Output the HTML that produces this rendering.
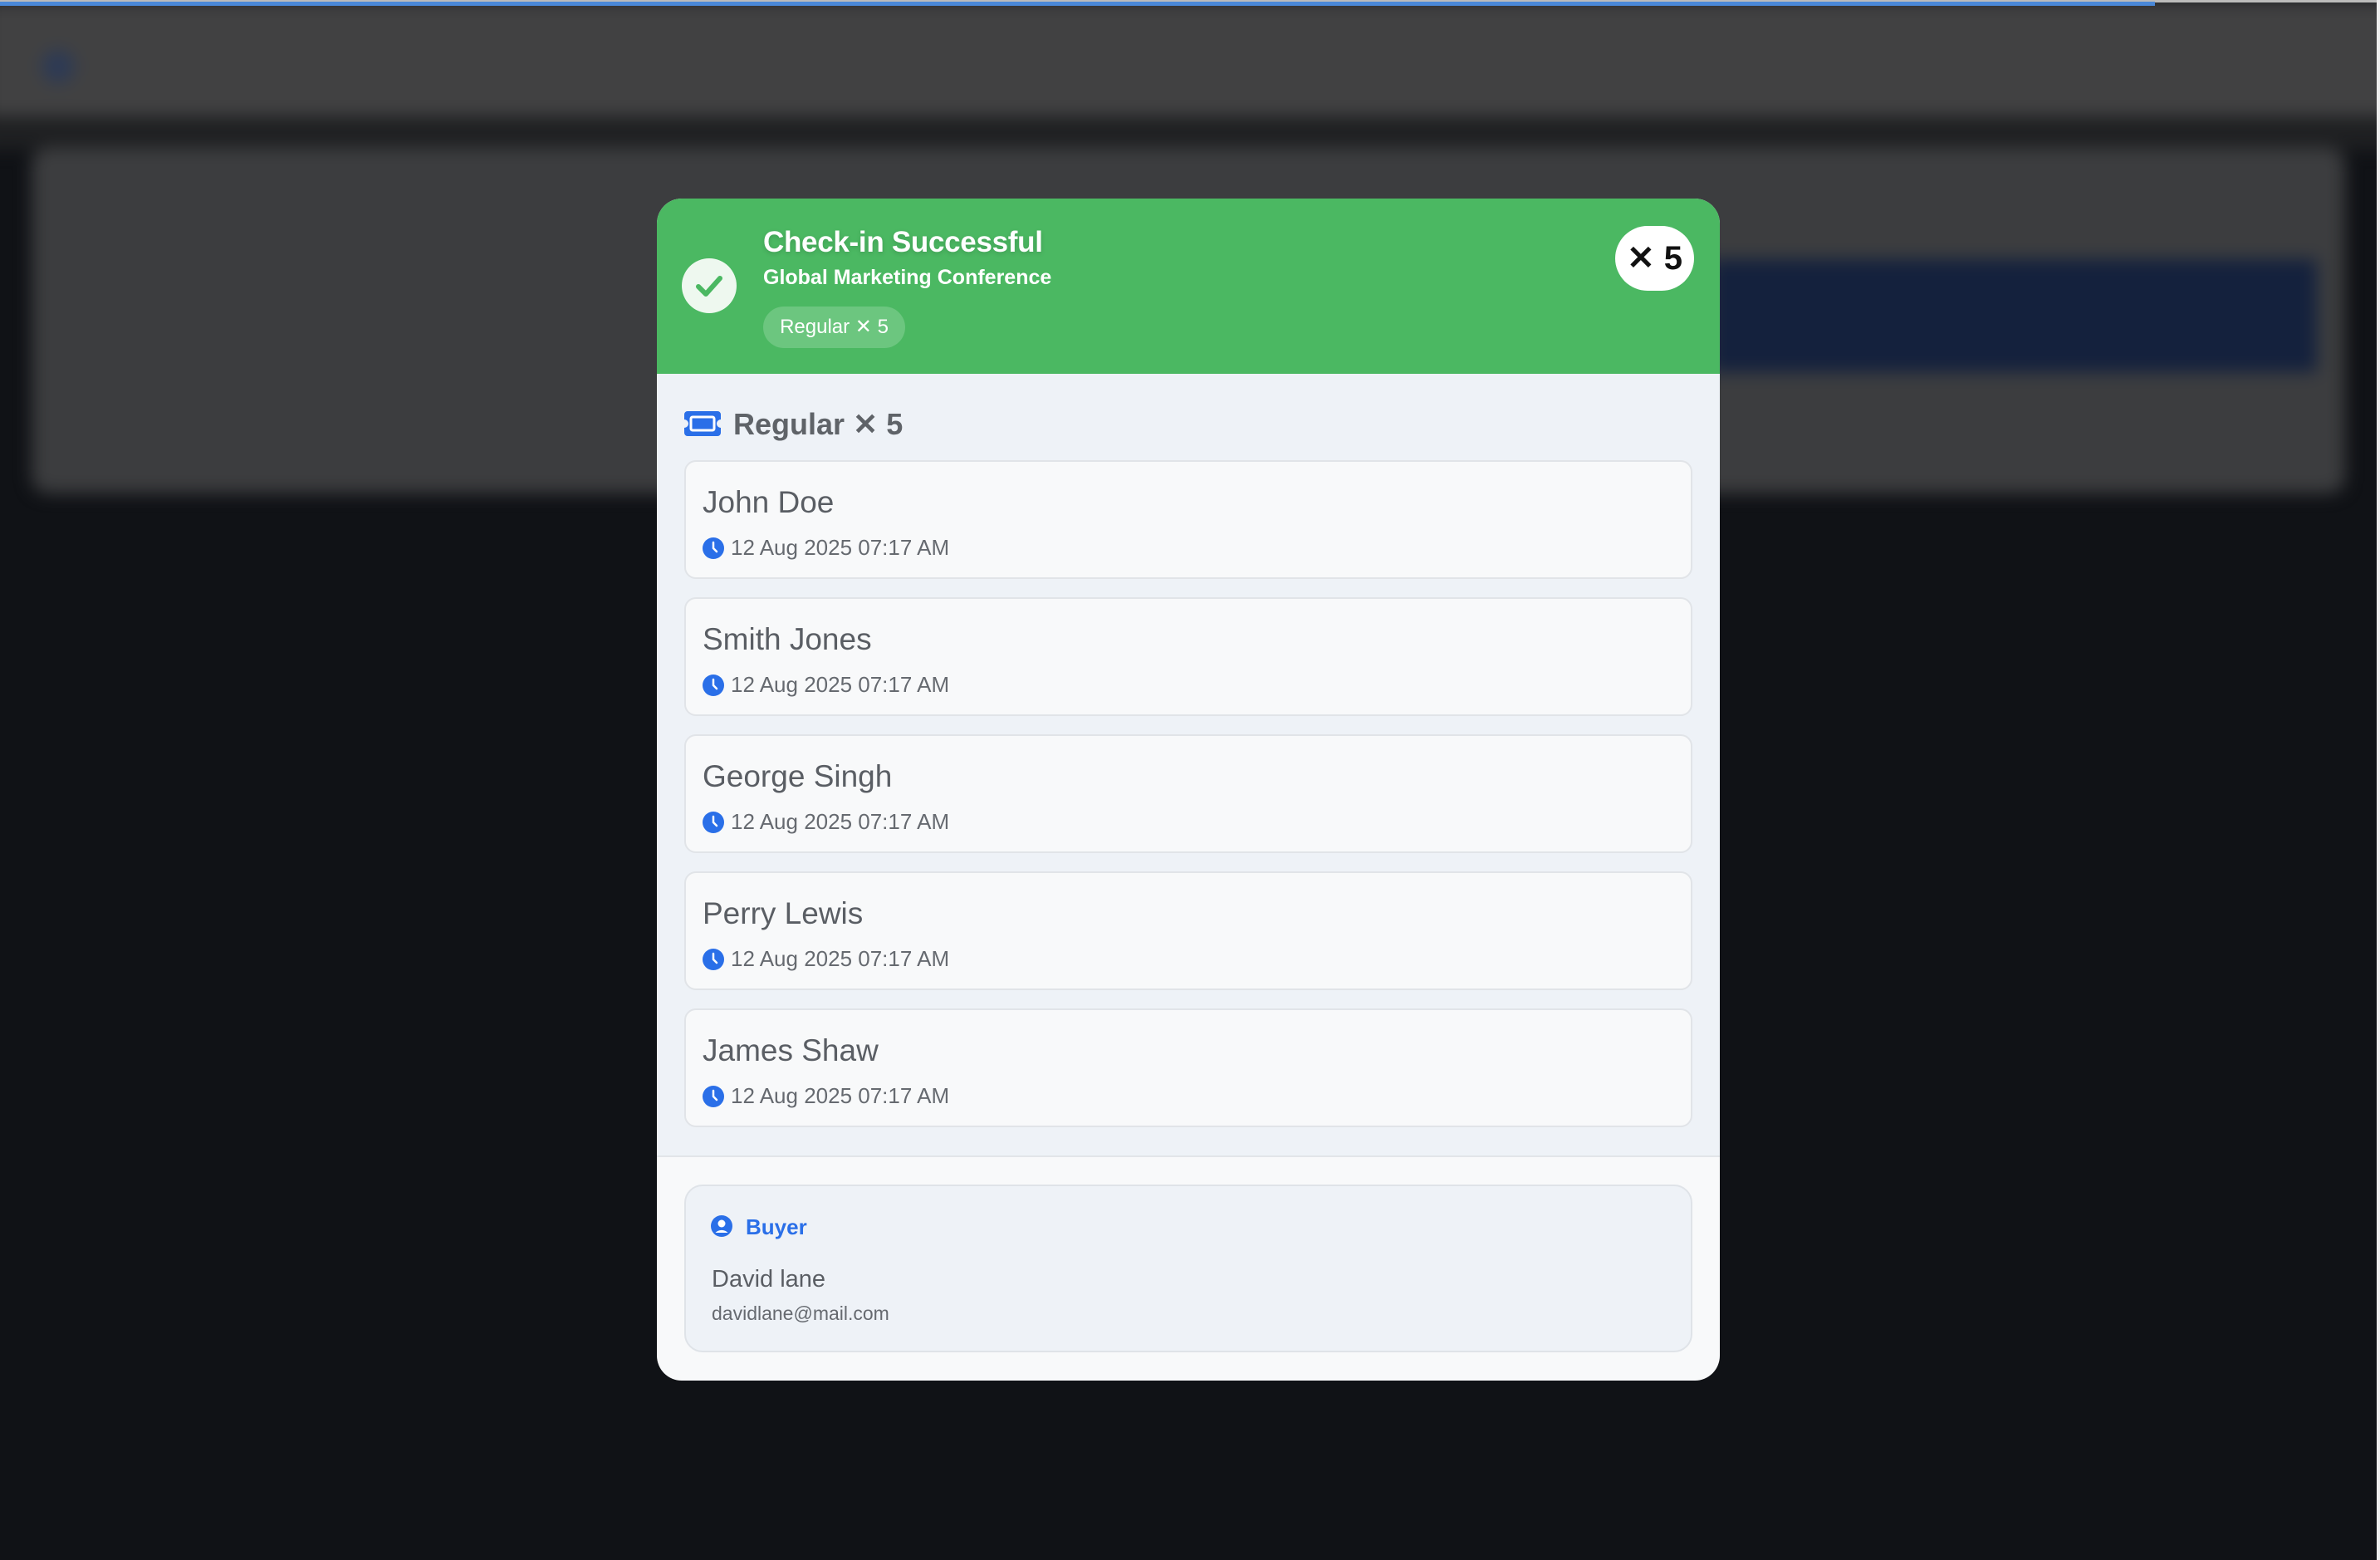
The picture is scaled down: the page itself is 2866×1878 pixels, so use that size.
<!DOCTYPE html>
<html><head><meta charset="utf-8"><style>
*{box-sizing:border-box;margin:0;padding:0}
html,body{width:2866px;height:1878px;overflow:hidden;background:#101216;font-family:"Liberation Sans",sans-serif}
.abs{position:absolute}
.card{width:1214px;height:143px;left:33px;background:#f8f9fa;border:2px solid #e1e4e8;border-radius:14px}
.name{position:absolute;left:20px;top:28px;font-size:37px;color:#5a5e64;font-weight:500}
.time{position:absolute;left:20px;top:88px;font-size:26px;color:#666a70;display:flex;align-items:center;gap:8px}
</style></head><body>
<div class="abs" style="left:0;top:0;width:2866px;height:1878px;filter:blur(10px)">
<div class="abs" style="left:-20px;top:0;width:2906px;height:140px;background:#414142"></div>
<div class="abs" style="left:-20px;top:140px;width:2906px;height:40px;background:#1f2022"></div>
<div class="abs" style="left:38px;top:178px;width:2786px;height:416px;background:#3c3d3f;border-radius:20px"></div>
<div class="abs" style="left:2060px;top:312px;width:730px;height:136px;background:#14213d"></div>
<div class="abs" style="left:50px;top:60px;width:40px;height:40px;border-radius:50%;background:#2d3a55"></div>
</div>
<div class="abs" style="left:0;top:0;width:2866px;height:3px;background:#bbb"></div>
<div class="abs" style="left:0;top:2px;width:2595px;height:5px;background:#4a88d8"></div>
<div class="abs" style="left:2862px;top:0;width:4px;height:1878px;background:#eee"></div>

<div class="abs" style="left:791px;top:239px;width:1280px;height:1423px;border-radius:30px;overflow:hidden;background:#f8f9fa">
  <div class="abs" style="left:0;top:0;width:1280px;height:211px;background:#4bb862"></div>
  <div class="abs" style="left:30px;top:72px;width:66px;height:66px;border-radius:50%;background:#eef8ef">
    <svg width="66" height="66" viewBox="0 0 66 66"><path d="M20 34 L29 43 L46 24" stroke="#4bb862" stroke-width="6" fill="none" stroke-linecap="round" stroke-linejoin="round"/></svg>
  </div>
  <div class="abs" style="left:128px;top:33px;font-size:35px;font-weight:bold;color:#fff;letter-spacing:-0.3px;text-shadow:0 2px 6px rgba(0,0,0,.15)">Check-in Successful</div>
  <div class="abs" style="left:128px;top:81px;font-size:25px;font-weight:bold;color:#fff">Global Marketing Conference</div>
  <div class="abs" style="left:128px;top:130px;width:171px;height:50px;border-radius:25px;background:#6cc67f;color:#fff;font-size:24px;line-height:50px;text-align:center">Regular ✕ 5</div>
  <div class="abs" style="left:1154px;top:33px;width:95px;height:78px;border-radius:39px;background:#fff;color:#111;font-size:40px;font-weight:bold;line-height:78px;text-align:center">✕ 5</div>

  <div class="abs" style="left:0;top:211px;width:1280px;height:943px;background:#eef2f7;border-bottom:2px solid #e2e5e9"></div>
  <div class="abs" style="left:33px;top:256px;">
    <svg width="44" height="30" viewBox="0 0 44 30"><path d="M4 0 H40 A4 4 0 0 1 44 4 V10 A5 5 0 0 0 44 20 V26 A4 4 0 0 1 40 30 H4 A4 4 0 0 1 0 26 V20 A5 5 0 0 0 0 10 V4 A4 4 0 0 1 4 0 Z" fill="#2a6fe8"/><rect x="8" y="7" width="28" height="16" rx="2" fill="none" stroke="#fff" stroke-width="3"/></svg>
  </div>
  <div class="abs" style="left:92px;top:251px;font-size:36px;font-weight:bold;color:#5f6368">Regular ✕ 5</div>

  <div class="abs card" style="top:315px"><div class="name">John Doe</div><div class="time"><svg width="26" height="26" viewBox="0 0 26 26"><circle cx="13" cy="13" r="13" fill="#2a6fe8"/><path d="M13 6 V13 L17 17" stroke="#fff" stroke-width="2.5" fill="none" stroke-linecap="round"/></svg>12 Aug 2025 07:17 AM</div></div>
  <div class="abs card" style="top:480px"><div class="name">Smith Jones</div><div class="time"><svg width="26" height="26" viewBox="0 0 26 26"><circle cx="13" cy="13" r="13" fill="#2a6fe8"/><path d="M13 6 V13 L17 17" stroke="#fff" stroke-width="2.5" fill="none" stroke-linecap="round"/></svg>12 Aug 2025 07:17 AM</div></div>
  <div class="abs card" style="top:645px"><div class="name">George Singh</div><div class="time"><svg width="26" height="26" viewBox="0 0 26 26"><circle cx="13" cy="13" r="13" fill="#2a6fe8"/><path d="M13 6 V13 L17 17" stroke="#fff" stroke-width="2.5" fill="none" stroke-linecap="round"/></svg>12 Aug 2025 07:17 AM</div></div>
  <div class="abs card" style="top:810px"><div class="name">Perry Lewis</div><div class="time"><svg width="26" height="26" viewBox="0 0 26 26"><circle cx="13" cy="13" r="13" fill="#2a6fe8"/><path d="M13 6 V13 L17 17" stroke="#fff" stroke-width="2.5" fill="none" stroke-linecap="round"/></svg>12 Aug 2025 07:17 AM</div></div>
  <div class="abs card" style="top:975px"><div class="name">James Shaw</div><div class="time"><svg width="26" height="26" viewBox="0 0 26 26"><circle cx="13" cy="13" r="13" fill="#2a6fe8"/><path d="M13 6 V13 L17 17" stroke="#fff" stroke-width="2.5" fill="none" stroke-linecap="round"/></svg>12 Aug 2025 07:17 AM</div></div>

  <div class="abs" style="left:33px;top:1187px;width:1214px;height:202px;background:#eef2f7;border:2px solid #dfe3e8;border-radius:22px">
    <svg class="abs" style="left:30px;top:35px" width="26" height="26" viewBox="0 0 26 26"><circle cx="13" cy="13" r="13" fill="#2a6fe8"/><circle cx="13" cy="10" r="4.5" fill="#fff"/><path d="M5.5 21 A9 7 0 0 1 20.5 21 Z" fill="#fff"/></svg>
    <div class="abs" style="left:72px;top:34px;font-size:26px;font-weight:bold;color:#2a6fe8">Buyer</div>
    <div class="abs" style="left:31px;top:96px;font-size:29px;font-weight:500;color:#5a5e64">David lane</div>
    <div class="abs" style="left:31px;top:140px;font-size:23px;color:#666a70">davidlane@mail.com</div>
  </div>
</div>
</body></html>
